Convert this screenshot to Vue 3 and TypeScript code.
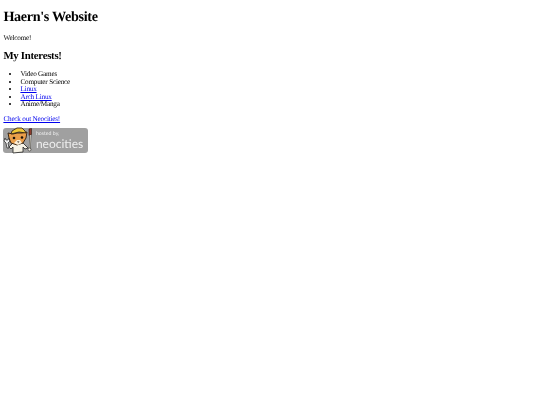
<script setup lang="ts">
const interests: { label: string; link?: boolean }[] = [
  { label: 'Video Games' },
  { label: 'Computer Science' },
  { label: 'Linux', link: true },
  { label: 'Arch Linux', link: true },
  { label: 'Anime/Manga' },
]
</script>

<template>
  <main class="page">
    <h1>Haern's Website</h1>
    <p>Welcome!</p>
    <h2>My Interests!</h2>
    <ul>
      <li v-for="item in interests" :key="item.label">
        <a v-if="item.link" href="#">{{ item.label }}</a>
        <template v-else>{{ item.label }}</template>
      </li>
    </ul>
    <p class="check"><a href="#">Check out Neocities!</a></p>
    <a class="badge" href="#">
      <svg class="cat" viewBox="0 0 32 28" width="32" height="28" aria-hidden="true">
        <path d="M2 11l-1 3 2 2 1 5 2 0-1-5 2-2-1-3-1 2-2 0z" fill="#eee" stroke="#222" stroke-width=".7" />
        <path d="M6 20l4-4 10 0 5 5-3 1-2-2 0 5-10 1 0-6-2 2z" fill="#f7f3e6" stroke="#222" stroke-width=".8" />
        <path d="M5 6l5 1 4-1 5 0 5-1-1 6-3 5-6 2-6-2-2-5z" fill="#ea9f4a" stroke="#2a1a0c" stroke-width=".9" />
        <path d="M8 7l1-3 5-3 5 0 3 3 1 2-7-1z" fill="#efc83a" stroke="#2a1a0c" stroke-width=".8" />
        <path d="M11 16l3-3 3 0 2 3-4 2z" fill="#fbeed6" />
        <circle cx="11" cy="11" r="1.3" fill="#1d130a" />
        <circle cx="19" cy="10.500" r="1.3" fill="#1d130a" />
        <path d="M14 14.500l2.500 0-1.200 1.200z" fill="#1d130a" />
        <path d="M26 2l2.500 -.5 0 6-2.500 1z" fill="#8c3a2c" stroke="#2a1a0c" stroke-width=".6" />
        <path d="M27.300 8l-.5 14" stroke="#222" stroke-width="2" />
        <path d="M27.300 8l-.5 14" stroke="#f4efe0" stroke-width="1" />
        <circle cx="26.500" cy="22.500" r="1.500" fill="#f7f3e6" stroke="#222" stroke-width=".6" />
      </svg>
      <span class="words">
        <span class="hosted">hosted by,</span>
        <span class="neo">neocities</span>
      </span>
    </a>
  </main>
</template>

<style scoped>
.page {
  padding: 3.4px;
  font-family: "Liberation Serif", "Times New Roman", serif;
  font-size: 7.2px;
  line-height: 7.5px;
  letter-spacing: -0.2px;
  color: #000;
  text-rendering: geometricPrecision;
  filter: blur(0.2px);
}
h1 {
  font-size: 14.2px;
  line-height: 17px;
  letter-spacing: -0.35px;
  margin: 5.500px 0 9px;
}
h2 {
  font-size: 10.8px;
  line-height: 13px;
  letter-spacing: -0.28px;
  margin: 8px 0 8px;
}
p {
  margin: 7px 0;
}
.check {
  margin-bottom: 4.500px;
}
ul {
  margin: 7px 0;
  padding-left: 17px;
}
a {
  color: #0000ee;
  text-decoration: underline;
}
.badge {
  position: relative;
  display: flex;
  align-items: center;
  box-sizing: border-box;
  width: 85px;
  height: 25px;
  padding: 0 0 0 32.500px;
  border-radius: 3px;
  background: #a0a0a0;
  text-decoration: none;
}
.cat {
  position: absolute;
  left: 0;
  top: -1px;
}
.words {
  display: flex;
  flex-direction: column;
  font-family: Lato, "Liberation Sans", sans-serif;
  letter-spacing: 0;
  color: #eeeeee;
}
.hosted {
  font-size: 5.2px;
  line-height: 7px;
}
.neo {
  font-size: 12px;
  line-height: 12px;
}
</style>
